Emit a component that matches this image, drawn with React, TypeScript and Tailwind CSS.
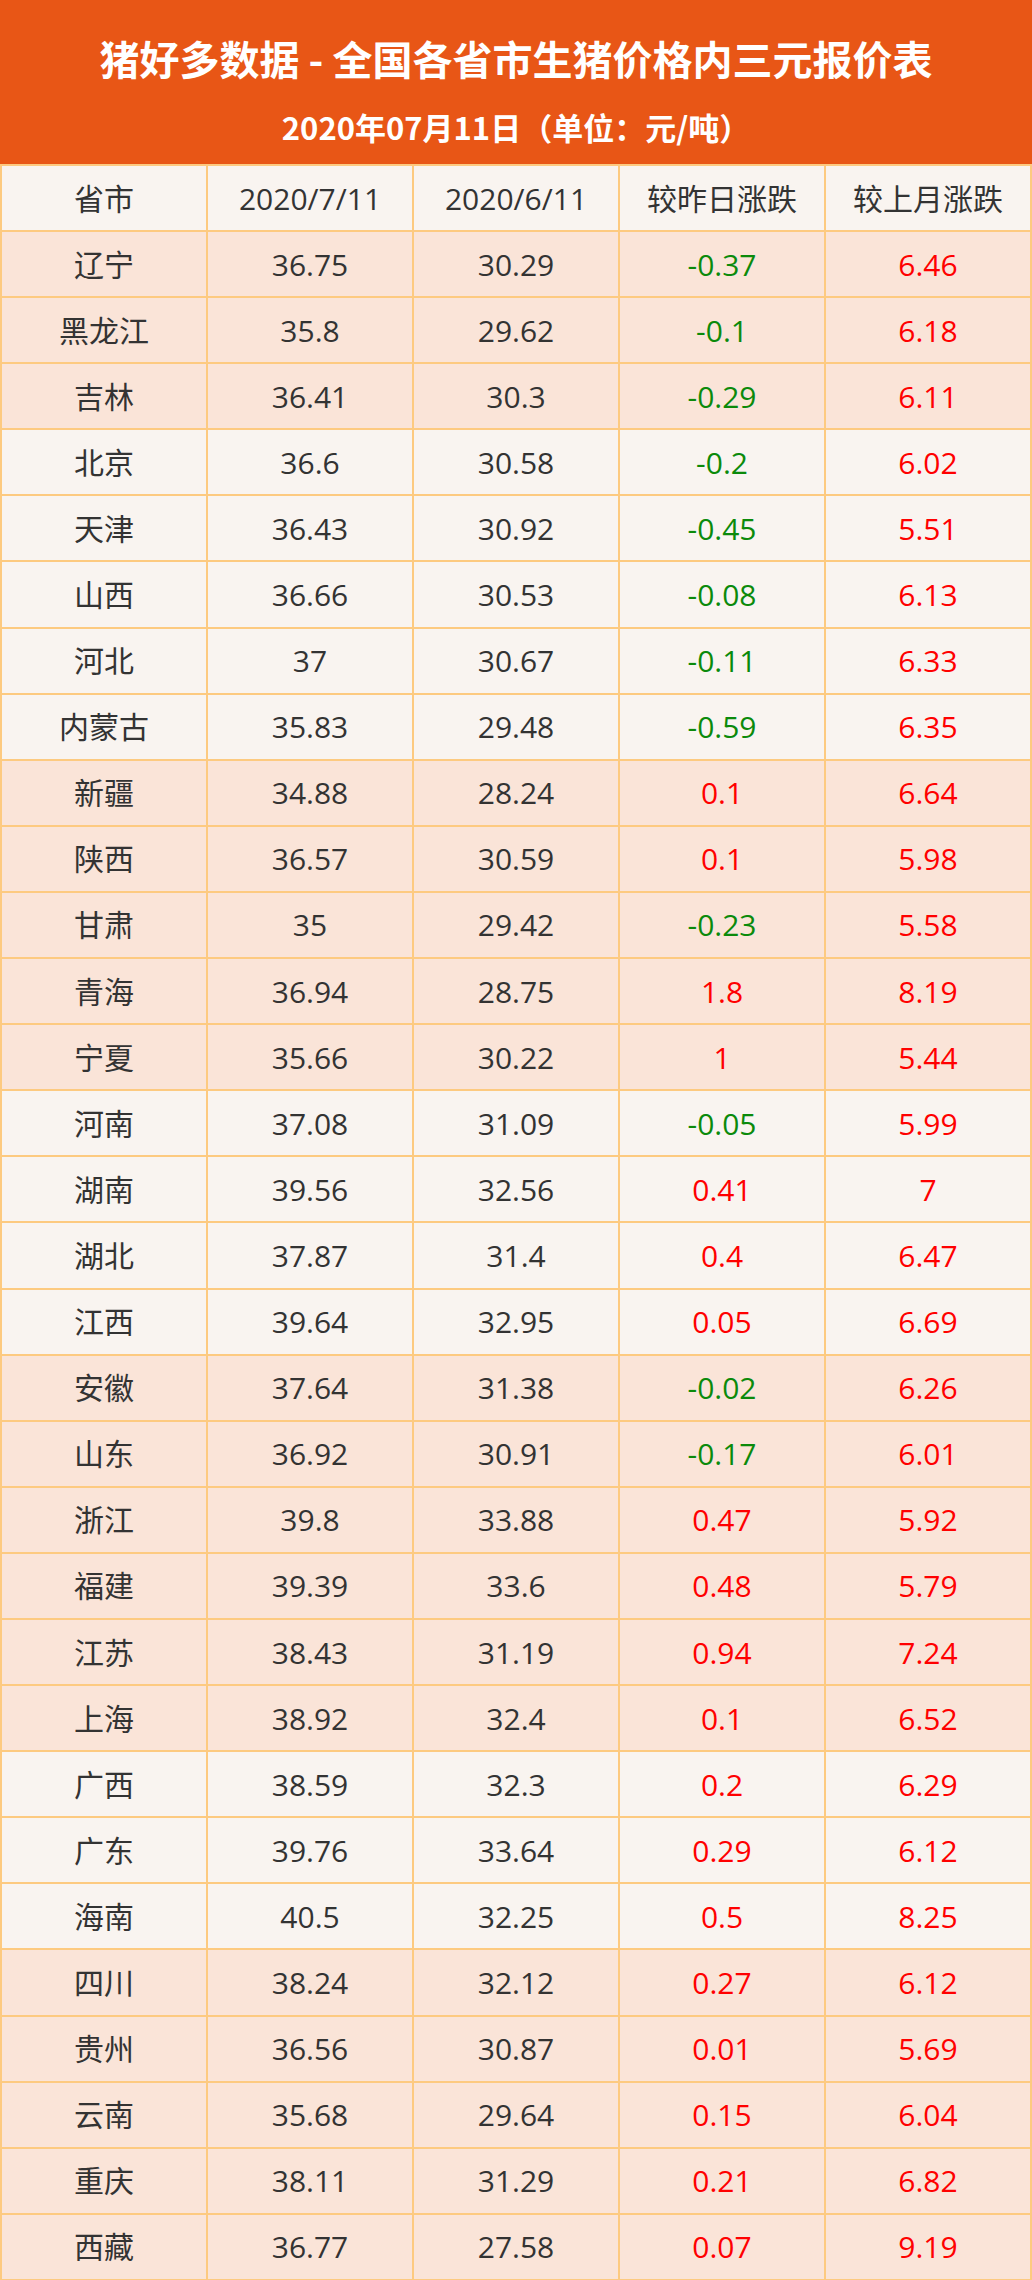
import React from 'react'

const rows: [string, string, string, string, string][] = [
  ['辽宁', '36.75', '30.29', '-0.37', '6.46'],
  ['黑龙江', '35.8', '29.62', '-0.1', '6.18'],
  ['吉林', '36.41', '30.3', '-0.29', '6.11'],
  ['北京', '36.6', '30.58', '-0.2', '6.02'],
  ['天津', '36.43', '30.92', '-0.45', '5.51'],
  ['山西', '36.66', '30.53', '-0.08', '6.13'],
  ['河北', '37', '30.67', '-0.11', '6.33'],
  ['内蒙古', '35.83', '29.48', '-0.59', '6.35'],
  ['新疆', '34.88', '28.24', '0.1', '6.64'],
  ['陕西', '36.57', '30.59', '0.1', '5.98'],
  ['甘肃', '35', '29.42', '-0.23', '5.58'],
  ['青海', '36.94', '28.75', '1.8', '8.19'],
  ['宁夏', '35.66', '30.22', '1', '5.44'],
  ['河南', '37.08', '31.09', '-0.05', '5.99'],
  ['湖南', '39.56', '32.56', '0.41', '7'],
  ['湖北', '37.87', '31.4', '0.4', '6.47'],
  ['江西', '39.64', '32.95', '0.05', '6.69'],
  ['安徽', '37.64', '31.38', '-0.02', '6.26'],
  ['山东', '36.92', '30.91', '-0.17', '6.01'],
  ['浙江', '39.8', '33.88', '0.47', '5.92'],
  ['福建', '39.39', '33.6', '0.48', '5.79'],
  ['江苏', '38.43', '31.19', '0.94', '7.24'],
  ['上海', '38.92', '32.4', '0.1', '6.52'],
  ['广西', '38.59', '32.3', '0.2', '6.29'],
  ['广东', '39.76', '33.64', '0.29', '6.12'],
  ['海南', '40.5', '32.25', '0.5', '8.25'],
  ['四川', '38.24', '32.12', '0.27', '6.12'],
  ['贵州', '36.56', '30.87', '0.01', '5.69'],
  ['云南', '35.68', '29.64', '0.15', '6.04'],
  ['重庆', '38.11', '31.29', '0.21', '6.82'],
  ['西藏', '36.77', '27.58', '0.07', '9.19'],
]

// rows shaded light instead of peach
const lightRows = new Set([3, 4, 5, 6, 7, 13, 14, 15, 16, 23, 24, 25])

const headers = ['省市', '2020/7/11', '2020/6/11', '较昨日涨跌', '较上月涨跌']

function Cell({ children, className = '' }: { children: React.ReactNode; className?: string }) {
  return (
    <div className={`flex items-center justify-center border-r-2 border-b-2 border-[#FDCA80] ${className}`}>
      {children}
    </div>
  )
}

export default function App() {
  return (
    <div className="w-[1032px] bg-white font-['Open_Sans','Noto_Sans_CJK_SC',sans-serif] text-[30px] text-[#333333]">
      {/* Title band */}
      <div className="flex h-[164px] flex-col bg-[#E85616] text-white">
        <div className="flex h-[116px] items-center justify-center text-[40px] font-bold font-['Noto_Sans_CJK_SC',sans-serif]">
          猪好多数据 - 全国各省市生猪价格内三元报价表
        </div>
        <div className="flex h-[22px] items-center justify-center text-[31px] font-bold font-['Noto_Sans_CJK_SC',sans-serif]">
          2020年07月11日（单位：元/吨）
        </div>
      </div>

      {/* Table */}
      <div className="grid grid-cols-5 border-l-2 border-t-2 border-[#FDCA80]">
        {headers.map((h) => (
          <Cell key={h} className="h-[66px] bg-[#F9F4F0]">
            {h}
          </Cell>
        ))}
        {rows.map((r, i) => {
          const bg = lightRows.has(i) ? 'bg-[#F9F4F0]' : 'bg-[#FAE4D8]'
          const dayColor = r[3].startsWith('-') ? 'text-[#0B8A0B]' : 'text-[#FF0000]'
          return (
            <React.Fragment key={r[0]}>
              <Cell className={`h-[66.1px] ${bg}`}>{r[0]}</Cell>
              <Cell className={`h-[66.1px] ${bg}`}>{r[1]}</Cell>
              <Cell className={`h-[66.1px] ${bg}`}>{r[2]}</Cell>
              <Cell className={`h-[66.1px] ${bg} ${dayColor}`}>{r[3]}</Cell>
              <Cell className={`h-[66.1px] ${bg} text-[#FF0000]`}>{r[4]}</Cell>
            </React.Fragment>
          )
        })}
      </div>
    </div>
  )
}
